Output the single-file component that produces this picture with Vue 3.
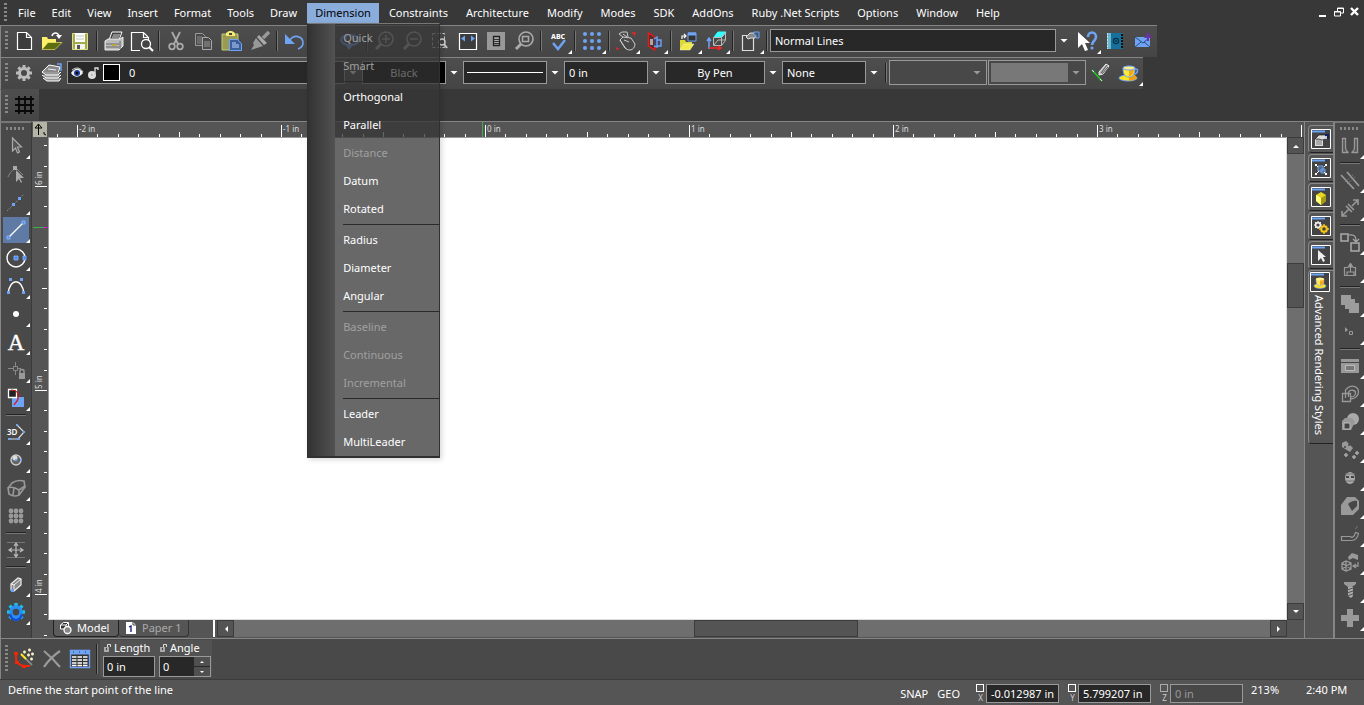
<template>
  <div class="app">
    <nav class="menubar">
      <span class="grip"></span>
      <div v-for="name in menus" :key="name" class="menu" :class="{ open: name === state.open }">
        <button class="menu-name" @click="toggle(name)">{{ name }}</button>
        <div v-if="name === 'Dimension' && name === state.open" class="dropdown">
          <div class="gutter"></div>
          <div class="entries">
            <template v-for="(item, i) in dimensionMenu" :key="i">
              <hr v-if="item === '|'" />
              <button v-else :disabled="disabledItems.includes(item)">{{ item }}</button>
            </template>
          </div>
        </div>
      </div>
      <div class="window-buttons">
        <button aria-label="Minimize"><svg viewBox="0 0 10 10"><path d="M1 9h7" stroke="#fff" stroke-width="2" /></svg></button>
        <button aria-label="Restore"><svg viewBox="0 0 10 10"><path d="M3.5 4V1h6v5H7M3 1.5h7" fill="none" stroke="#fff" /><path d="M.5 4.5h6V9h-6zM0 5h7" fill="none" stroke="#fff" /></svg></button>
        <button aria-label="Close"><svg viewBox="0 0 10 10"><path d="M1 1l7 7M8 1L1 8" stroke="#fff" stroke-width="2.4" /></svg></button>
      </div>
    </nav>

    <div class="toolbar">
      <span class="grip"></span>
      <template v-for="(name, i) in mainTools" :key="i">
        <span v-if="name === '|'" class="sep"></span>
        <button v-else class="tool" :class="{ more: withMore.includes(name) }" :aria-label="name">
          <svg viewBox="0 0 28 28" v-html="icons[name]"></svg>
        </button>
      </template>
      <div class="combo">
        <div class="box style-box">
          <select aria-label="Line style"><option>Normal Lines</option></select>
        </div>
        <span class="arrow"></span>
      </div>
      <button v-for="name in helpTools" :key="name" class="tool" :class="{ more: name === 'help' }" :aria-label="name">
        <svg viewBox="0 0 28 28" v-html="icons[name]"></svg>
      </button>
    </div>

    <div class="toolbar">
      <span class="grip"></span>
      <button class="tool" aria-label="Settings"><svg viewBox="0 0 28 28" v-html="icons.gear"></svg></button>
      <button class="tool" aria-label="Layers"><svg viewBox="0 0 28 28" v-html="icons.layers"></svg></button>
      <div class="combo">
        <div class="box layer-box">
          <svg viewBox="0 0 32 16" v-html="icons.eyeLock"></svg>
          <span class="swatch"></span>
          <select aria-label="Layer"><option>0</option></select>
        </div>
        <span class="arrow"></span>
      </div>
      <div class="combo">
        <div class="box color-box">
          <select aria-label="Pen color"><option>Black</option></select>
        </div>
        <span class="arrow"></span>
      </div>
      <div class="combo">
        <div class="box pattern-box">
          <select aria-label="Pen pattern"><option></option></select>
        </div>
        <span class="arrow"></span>
      </div>
      <div class="combo">
        <div class="box">
          <select aria-label="Pen width"><option>0 in</option></select>
        </div>
        <span class="arrow"></span>
      </div>
      <div class="combo">
        <div class="box brush-box">
          <select aria-label="Brush color"><option>By Pen</option></select>
        </div>
        <span class="arrow"></span>
      </div>
      <div class="combo">
        <div class="box">
          <select aria-label="Brush pattern"><option>None</option></select>
        </div>
        <span class="arrow"></span>
      </div>
      <span class="sep"></span>
      <div class="box off-box">
        <select aria-label="Material" disabled><option></option></select>
        <span class="arrow"></span>
      </div>
      <div class="box off-box filled">
        <select aria-label="Render style" disabled><option></option></select>
        <span class="arrow"></span>
      </div>
      <button class="tool" aria-label="Pick"><svg viewBox="0 0 28 28" v-html="icons.pick"></svg></button>
      <button class="tool more" aria-label="Render"><svg viewBox="0 0 28 28" v-html="icons.cup"></svg></button>
    </div>

    <div class="toolbar last">
      <span class="grip"></span>
      <button class="tool" aria-label="Grid"><svg viewBox="0 0 28 28" v-html="icons.hash"></svg></button>
    </div>

    <main class="work">
      <aside class="side left">
        <span class="grip flat"></span>
        <template v-for="(name, i) in drawTools" :key="i">
          <span v-if="name === '|'" class="sep flat"></span>
          <button
            v-else
            class="tool"
            :class="{ more: name !== 'node', active: name === state.tool }"
            :aria-label="name"
            @click="state.tool = name"
          >
            <svg viewBox="0 0 28 28" v-html="icons[name]"></svg>
          </button>
        </template>
      </aside>

      <section class="sheet">
        <div class="corner">
          <svg viewBox="0 0 14 14"><path d="M5.5 13V3M2 6l3.5-4L9 6M2 6h7M11 10v2l2 1" fill="none" stroke="#000" /></svg>
        </div>
        <svg class="ruler-x">
          <rect v-for="t in ticksX" :key="t.at" :x="t.at" :y="15 - t.size" width="1" :height="t.size" fill="#fff" />
          <text v-for="(x, i) in inchesX" :key="x" :x="x + 2" y="10">{{ i - 2 }} in</text>
          <rect x="434" y="0" width="1" height="15" fill="#3fae4a" />
        </svg>
        <svg class="ruler-y">
          <rect v-for="t in ticksY" :key="t.at" :x="14 - t.size" :y="t.at" :width="t.size" height="1" fill="#fff" />
          <text v-for="(y, i) in inchesY" :key="y" :transform="`translate(9 ${y - 1}) rotate(-90)`">{{ 6 - i }} in</text>
          <rect x="0" y="90" width="11" height="1" fill="#3fae4a" />
          <rect x="11" y="90" width="3" height="1" fill="#f0f" />
        </svg>
        <div class="canvas"></div>
        <div class="scroll-y">
          <button aria-label="Scroll up"><svg viewBox="0 0 8 8"><path d="M1 6l3-3 3 3z" fill="#fff" /></svg></button>
          <span class="before"></span><span class="thumb"></span><span class="after"></span>
          <button aria-label="Scroll down"><svg viewBox="0 0 8 8"><path d="M1 2l3 3 3-3z" fill="#fff" /></svg></button>
        </div>
        <div class="sheet-tabs">
          <div class="tabs">
            <button class="tab current"><svg viewBox="0 0 14 14" v-html="icons.model"></svg>Model</button>
            <button class="tab"><svg viewBox="0 0 14 14" v-html="icons.paper"></svg>Paper 1</button>
          </div>
          <div class="scroll-x">
            <button aria-label="Scroll left"><svg viewBox="0 0 8 8"><path d="M6 1L3 4l3 3z" fill="#fff" /></svg></button>
            <span class="before"></span><span class="thumb"></span><span class="after"></span>
            <button aria-label="Scroll right"><svg viewBox="0 0 8 8"><path d="M2 1l3 3-3 3z" fill="#fff" /></svg></button>
          </div>
          <div class="size-box"></div>
        </div>
      </section>

      <aside class="palettes">
        <button v-for="name in palettes" :key="name" class="palette" :aria-label="name">
          <svg viewBox="0 0 22 22"><g v-html="icons.frame"></g><g v-html="icons[name]"></g></svg>
        </button>
        <button class="palette current">
          <svg viewBox="0 0 22 22"><g v-html="icons.frame"></g><g v-html="icons.palCup"></g></svg>
          <span>Advanced Rendering Styles</span>
        </button>
      </aside>

      <aside class="side right">
        <span class="grip flat"></span>
        <template v-for="(name, i) in modifyTools" :key="i">
          <span v-if="name === '|'" class="sep flat"></span>
          <button v-else class="tool more" :aria-label="name">
            <svg viewBox="0 0 28 28" v-html="icons[name]"></svg>
          </button>
        </template>
      </aside>
    </main>

    <div class="inspector">
      <span class="grip"></span>
      <button v-for="name in editTools" :key="name" class="tool" :aria-label="name">
        <svg viewBox="0 0 28 28" v-html="icons[name]"></svg>
      </button>
      <span class="sep"></span>
      <div class="field">
        <label for="length"><svg viewBox="0 0 9 10" v-html="icons.lock"></svg>Length</label>
        <input id="length" v-model="state.length" />
      </div>
      <div class="field">
        <label for="angle"><svg viewBox="0 0 9 10" v-html="icons.lock"></svg>Angle</label>
        <div class="spin">
          <input id="angle" v-model="state.angle" />
          <div class="steps">
            <button aria-label="Increase" @click="state.angle++"><svg viewBox="0 0 8 8"><path d="M2 5l2-2 2 2z" fill="#fff" /></svg></button>
            <button aria-label="Decrease" @click="state.angle--"><svg viewBox="0 0 8 8"><path d="M2 3l2 2 2-2z" fill="#fff" /></svg></button>
          </div>
        </div>
      </div>
    </div>

    <footer class="status">
      <span class="hint">Define the start point of the line</span>
      <button class="snap">SNAP</button>
      <button class="geo">GEO</button>
      <div v-for="c in coords" :key="c.axis" class="coord" :class="{ off: c.off }">
        <label :for="c.axis"><i></i>{{ c.axis }}</label>
        <input :id="c.axis" v-model="c.value" :disabled="c.off" />
      </div>
      <span class="zoom">213%</span>
      <span class="clock">2:40 PM</span>
    </footer>
  </div>
</template>

<script setup>
import { reactive } from 'vue'

const state = reactive({
  open: 'Dimension',
  tool: 'line',
  length: '0 in',
  angle: 0,
})

const toggle = (name) => {
  state.open = state.open === name ? '' : name
}

const coords = reactive([
  { axis: 'X', value: '-0.012987 in' },
  { axis: 'Y', value: '5.799207 in' },
  { axis: 'Z', value: '0 in', off: true },
])

const menus = [
  'File', 'Edit', 'View', 'Insert', 'Format', 'Tools', 'Draw', 'Dimension', 'Constraints',
  'Architecture', 'Modify', 'Modes', 'SDK', 'AddOns', 'Ruby .Net Scripts', 'Options', 'Window', 'Help',
]

const dimensionMenu = [
  'Quick', 'Smart', '|',
  'Orthogonal', 'Parallel', 'Distance', 'Datum', 'Rotated', '|',
  'Radius', 'Diameter', 'Angular', '|',
  'Baseline', 'Continuous', 'Incremental', '|',
  'Leader', 'MultiLeader',
]
const disabledItems = ['Quick', 'Smart', 'Distance', 'Baseline', 'Continuous', 'Incremental']

const mainTools = [
  'file', 'open', 'save', '|', 'print', 'preview', '|', 'cut', 'copy', 'paste', 'brush', '|',
  'undo', 'redo', 'orbit', '|', 'zoomIn', 'zoomOut', 'zoomWindow', 'fit', 'page', 'zoomPage', '|',
  'spell', '|', 'dots', '|', 'hand', 'plane', '|', 'folder', 'cube', '|', 'props', '|',
]
const withMore = ['spell', 'dots', 'hand', 'plane', 'folder', 'cube', 'props']
const helpTools = ['help', 'book', 'mail']
const drawTools = [
  'select', 'node', 'construct', 'line', 'circle', 'curve', 'point', 'text', 'snapLock', 'shapes', '|',
  'poly3d', 'sphere', 'mesh', 'array', '|', 'move', '|', 'solid', 'options',
]
const modifyTools = [
  'magnet', '|', 'split', 'stretch', '|', 'copyTo', 'exportBox', '|', 'union', 'vertex', '|',
  'window', 'offset', 'shell', 'spray', 'face', 'bevel', 'bend', 'explode', 'screw', 'plus',
]
const palettes = ['palProps', 'palSelect', 'palCube', 'palGears', 'palCursor']
const editTools = ['wand', 'cancel', 'table']

// 204px per inch, ten divisions each
const makeTicks = (first, from, to) => {
  const list = []
  for (let n = -10; n < 80; n++) {
    const at = Math.round(first + n * 20.4)
    if (at < from || at > to) continue
    const mod = ((n % 10) + 10) % 10
    list.push({ at, size: mod === 0 ? 12 : mod === 5 ? 5 : 3 })
  }
  return list
}
const ticksX = makeTicks(29, 0, 1600)
const ticksY = makeTicks(49, 0, 1200)
const inchesX = [29, 233, 437, 641, 845, 1049]
const inchesY = [49, 253, 457]

const magnifier = '<circle cx="16" cy="12" r="7" fill="none" stroke="#aaa" stroke-width="1.6"/><path d="M11 17l-5 5" stroke="#aaa" stroke-width="3"/>'

const dotGrid = (steps, r, color) =>
  steps.map((y) => steps.map((x) => `<circle cx="${x}" cy="${y}" r="${r}" fill="${color}"/>`).join('')).join('')

// eight teeth round a ring
const cog = (teeth, ring) =>
  [0, 45, 90, 135].map((a) => `<path d="M14 6v16" stroke="${teeth}" stroke-width="3" transform="rotate(${a} 14 14)"/>`).join('') +
  `<circle cx="14" cy="14" r="4.5" fill="#484848" stroke="${ring}" stroke-width="3"/>`

const icons = {
  file: '<path d="M7.5 5.5h9l5 5v12h-14zM16.5 5.5v5h5" fill="#3c3c3c" stroke="#fff" stroke-width="1.2"/>',
  open: '<path d="M4 22V10h5l1 2h8v4" fill="#ffef6b"/><path d="M4 22.5l6-7h14l-7 7z" fill="#5c6e10" stroke="#ffef6b" stroke-width=".6"/><path d="M14 9c1-4 6-4 7 0" fill="none" stroke="#fff" stroke-width="1.5"/><path d="M18 8h6l-3 4z" fill="#fff"/>',
  save: '<path d="M6.5 6.5h15v16h-15z" fill="#a6a84e" stroke="#e0e28a"/><path d="M9 6h10v9H9z" fill="#fff"/><path d="M10 9h8M10 12h8" stroke="#b8c8c0"/><path d="M9 17h10v5H9z" fill="#f4f4f4"/><path d="M11 18h3v4h-3z" fill="#555"/>',
  print: '<path d="M9 13l3-8h10l-3 8z" fill="#444" stroke="#fff"/><path d="M13 8h7M12 10h7" stroke="#ccc"/><path d="M5 14l3-2h12l3-2v9l-4 4H5z" fill="#bbb" stroke="#eee"/><path d="M6 17h13M6 20h13M20 14v8" stroke="#666"/><path d="M12 17h4v2h-4z" fill="#b8a838"/>',
  preview: '<path d="M12 23.5H3.5v-18h12l5 5V14M15.5 5.5v5h5" fill="none" stroke="#fff" stroke-width="1.2"/><circle cx="18" cy="17" r="4.5" fill="#444" stroke="#fff" stroke-width="1.3"/><path d="M21 20l4 4" stroke="#fff" stroke-width="2.2"/>',
  cut: '<path d="M10 5l6 12M18 5l-6 12" stroke="#aaa" stroke-width="1.8"/><circle cx="10" cy="19.5" r="2.8" fill="none" stroke="#aaa" stroke-width="1.8"/><circle cx="18" cy="19.5" r="2.8" fill="none" stroke="#aaa" stroke-width="1.8"/>',
  copy: '<path d="M5.5 6.5h7l3 3v9h-10z" fill="#4a4a4a" stroke="#999"/><path d="M7 10h5M7 12h5M7 14h5M7 16h5" stroke="#888"/><path d="M12.5 10.5h6l3 3v9h-9z" fill="#4a4a4a" stroke="#aaa"/><path d="M14 15h6M14 17h6M14 19h6" stroke="#999"/>',
  paste: '<path d="M4 7h16v16H4z" fill="#9a9a52" stroke="#c8c878"/><path d="M8 9V6l3-2h3l3 2v3z" fill="#f4eb72"/><path d="M11 6h3v2h-3z" fill="#444"/><path d="M11.5 12.5h8l4 4v7h-12z" fill="#3c5f9c" stroke="#6fa4f5"/><path d="M14 16h4M14 18h7M14 20h7" stroke="#bcd4ff"/>',
  brush: '<path d="M23 5l-6 6" stroke="#999" stroke-width="3.5"/><path d="M13 8l8 8-3 2-7-8z" fill="#aaa"/><path d="M10 11l7 8-6 2-6 2 3-5-1-2z" fill="#999"/>',
  undo: '<path d="M10 13c4-6 13-4 13 3 0 4-3 5-5 6" fill="none" stroke="#6fa4f5" stroke-width="1.6"/><path d="M5 7v10h10z" fill="#6fa4f5"/>',
  redo: '<path d="M18 13C14 7 5 9 5 16c0 4 3 5 5 6" fill="none" stroke="#888" stroke-width="1.6"/><path d="M23 7v10H13z" fill="#888"/>',
  orbit: '<ellipse cx="14" cy="13" rx="9" ry="5" fill="none" stroke="#6fa4f5" stroke-width="2"/><path d="M10 15c-1-10 8-10 8 0" fill="none" stroke="#6fa4f5" stroke-width="1.6"/><path d="M9 17h9l-5 6z" fill="#6fa4f5"/>',
  zoomIn: magnifier + '<path d="M12 12h8M16 8v8" stroke="#aaa" stroke-width="1.5"/>',
  zoomOut: magnifier + '<path d="M12 12h8" stroke="#aaa" stroke-width="1.5"/>',
  zoomWindow: '<path d="M6.5 6.5h12v14h-12z" fill="none" stroke="#ccc" stroke-dasharray="3 2"/><circle cx="16" cy="15" r="3" fill="#444" stroke="#ccc" stroke-width="1.5"/><path d="M18 17l3 4" stroke="#ccc" stroke-width="2"/>',
  fit: '<path d="M5.5 6.5h17v16h-17z" fill="#3c3c3c" stroke="#fff" stroke-width="1.2"/><path d="M7 11.5l4-3v6zM21 11.5l-4-3v6z" fill="#6fa4f5"/>',
  page: '<path d="M5 5h18v18H5z" fill="#999"/><path d="M11.5 9.5h6v9h-6z" fill="#aaa" stroke="#222" stroke-width="1.3"/><path d="M12 12.5h5M12 14.5h5M12 16.5h5" stroke="#333"/>',
  zoomPage: magnifier + '<path d="M12.5 9.5h6v5h-6z" fill="none" stroke="#aaa" stroke-width="1.5"/>',
  spell: '<text x="14" y="12" text-anchor="middle" font-family="Noto Sans, sans-serif" font-weight="800" font-size="7" fill="#fff">ABC</text><path d="M9 16l5 6 7-9" fill="none" stroke="#6fa4f5" stroke-width="2.4"/>',
  dots: dotGrid([7, 14, 21], 2, '#6fa4f5'),
  hand: '<path d="M8 13l3-3 8 1 4 6c0 3-2 6-5 6-2 0-4-1-5-2zM8 13l6 9M11 10l-4-3 3-2h5l1 5M11 7l4 3M12 13l5 2" fill="none" stroke="#ccc"/><path d="M20 6h3l-1 3M5 23v-2l2 1" stroke="#e22" stroke-width="1.3" fill="none"/>',
  plane: '<path d="M8.5 6v13l6 4V10z" fill="#433" stroke="#f11" stroke-width="1.4"/><path d="M14 12l3-2v10l-3-1M17 13h4v6h-4" fill="#446" stroke="#6fa4f5" stroke-width="1.4"/><path d="M10 12h3v6h-3z" fill="#aaa"/>',
  folder: '<path d="M6 23V13h5l1 2h6v3" fill="#ddd83a"/><path d="M6 23l4-6h10l-4 6z" fill="#f3ec48" stroke="#fff" stroke-width=".4"/><path d="M14 6h8v8h-8z" fill="#333" stroke="#6fa4f5"/><path d="M14 7h8" stroke="#6fa4f5" stroke-width="3"/><path d="M8 12V9h4M10 7l2 2-2 2" fill="none" stroke="#fff" stroke-width="1.2"/>',
  cube: '<path d="M12 10l4-5h8l-4 5z" fill="#3ff" stroke="#3ff"/><path d="M11.5 10.5h8v8h-8zM19.5 10.5l4-5v8l-4 5M12 18l4-5h7" fill="none" stroke="#bbb"/><path d="M7 22V12M5 14l2-3 2 3" fill="none" stroke="#6fa4f5" stroke-width="1.5"/><path d="M7 21h11M16 19l3 2-3 2" fill="none" stroke="#f22" stroke-width="1.5"/>',
  props: '<path d="M6.5 8.500h11v15h-11z" fill="#444" stroke="#ddd" stroke-width="1.2"/><path d="M10 10l4-4h5l2 2-2 3h-4l-3 1z" fill="#888" stroke="#ddd"/><path d="M18 5h5v6h-3V8h-2z" fill="#456" stroke="#6fa4f5"/>',
  help: '<path d="M5 5v16l4-4 3 7 3-1-3-7h5z" fill="#fff"/><path d="M15 10c0-6 8-6 8 0 0 4-4 4-4 8" fill="none" stroke="#6fa4f5" stroke-width="2.6"/><circle cx="19" cy="21" r="1.6" fill="#6fa4f5"/>',
  book: '<path d="M6 6h16v16H6z" fill="#186f9c"/><path d="M6 6h4v16H6z" fill="#68b8d0"/><path d="M6.5 6v16" stroke="#cde" stroke-dasharray="2 1"/><path d="M21 7v15" stroke="#111" stroke-width="2" stroke-dasharray="2 1"/><circle cx="15" cy="14" r="2.6" fill="none" stroke="#034" stroke-width="1.2"/><circle cx="15" cy="14" r="1" fill="#034"/>',
  mail: '<path d="M6 10h15v10H6z" fill="#6fa4f5"/><path d="M6 10l8 6 7-6M6 20l6-5M21 20l-6-5" fill="none" stroke="#294a80"/><path d="M19 14V8M17 10l2-3 2 3z" stroke="#6a34a8" stroke-width="2" fill="#6a34a8"/>',
  gear: cog('#bbb', '#bbb'),
  layers: '<path d="M4 13l7-7 6 1 5 1-2 6H7z" fill="#888" stroke="#fff"/><path d="M4 13l4 3h12l3-3M4 16l4 3h12l3-3M5 19l4 3h12l2-3" fill="#999" stroke="#fff"/><path d="M10 10l8 1" stroke="#eee"/><path d="M19 5h4v7" stroke="#6fa4f5" stroke-width="1.5" fill="none"/>',
  eyeLock: '<path d="M1 8c4-6 9-6 12 0-4 5-9 5-12 0z" fill="#eee"/><path d="M2 5c4-3 8-3 11 2" fill="none" stroke="#ccc"/><circle cx="7" cy="8" r="3" fill="#1f3d96"/><circle cx="7" cy="8" r="1.2" fill="#000"/><circle cx="22" cy="10" r="4" fill="#ddd"/><path d="M25 8V3h3v2" fill="none" stroke="#ddd" stroke-width="1.3"/><path d="M22 9v2" stroke="#999"/>',
  pick: '<path d="M5 11l10 11" stroke="#2c2" stroke-width="1.5"/><path d="M5 11l2 2M13 20l2 2" stroke="#ddd"/><path d="M12 13l7-8 3 2-6 8-4 1z" fill="#bbb" stroke="#eee"/><path d="M14 14l6-8M15 15l6-7" stroke="#555"/>',
  cup: '<ellipse cx="13" cy="19" rx="9" ry="3" fill="#ffe61c" stroke="#6fa4f5"/><path d="M14 16h6l2 3-4 2.5h-4z" fill="#f0a010"/><path d="M8 9c0 8 3 9 6 9s6-1 6-9z" fill="#ffe93a" stroke="#6fa4f5"/><path d="M14 9h5c0 6-2 8-5 8z" fill="#f4a81c"/><ellipse cx="14" cy="9" rx="6" ry="2" fill="#fff08a" stroke="#6fa4f5"/><path d="M20 10c4-1 3 5-1 5" fill="none" stroke="#6fa4f5" stroke-width="1.5"/>',
  hash: '<path d="M9 5v18M15 5v18M21 5v18M5 8h19M5 14h19M5 20h19" stroke="#080808" stroke-width="1.8"/>',

  select: '<path d="M10.5 6v13l3-3 2 5 2-1-2-5h4z" fill="#555" stroke="#aaa" stroke-width="1.2"/>',
  node: '<path d="M6 17c2-5 5-7 8-9l7 7" fill="none" stroke="#888"/><path d="M11 6h4v4h-4z" fill="#aaa"/><path d="M14 10v12l3-3 2 4 1-1-2-4h4z" fill="#aaa"/>',
  construct: '<path d="M5 23L22 6" stroke="#888" stroke-dasharray="2 1"/><path d="M10 15h3v3h-3zM16 9h3v3h-3z" fill="#6fa4f5"/>',
  line: '<path d="M6 22L22 6" stroke="#fff" stroke-width="1.3"/><path d="M5 20h3v3H5zM20 5h3v3h-3z" fill="#4d8ef0" stroke="#a5c6ff" stroke-width=".7"/>',
  circle: '<circle cx="14" cy="14" r="9" fill="none" stroke="#fff" stroke-width="1.4"/><path d="M12 12h4v4h-4zM21 12h3v4h-3z" fill="#4d8ef0" stroke="#8ab4ff" stroke-width=".8"/>',
  curve: '<path d="M6 21C9 6 19 6 22 21" fill="none" stroke="#fff" stroke-width="1.3"/><path d="M5 19h3v3H5zM20 19h3v3h-3zM7 6h3v3H7zM18 6h3v3h-3z" fill="#6fa4f5"/>',
  point: '<circle cx="14" cy="14" r="3" fill="#fff"/>',
  text: '<text x="14" y="22" text-anchor="middle" font-family="Liberation Serif, serif" font-size="23" fill="#fff" stroke="#fff" stroke-width=".4">A</text>',
  snapLock: '<path d="M6 12.5h5M15 12.5h4M13.5 6v4M13.5 15v4M11.5 10.5h4v4h-4z" fill="none" stroke="#888"/><path d="M17 17h6v6h-6z" fill="#999"/><path d="M18 17v-2c0-2 4-2 4 0v2" fill="none" stroke="#999" stroke-width="1.4"/>',
  shapes: '<path d="M10 13h12v10H10z" fill="#6fa4f5"/><path d="M6.5 5.5h8v8h-8z" fill="#222" stroke="#fff" stroke-width="1.3"/><path d="M9 6c7 0 8 4 7 9-1 3-3 4-4 6" fill="none" stroke="#d11" stroke-width="1.2"/>',
  poly3d: '<text x="5" y="17" font-family="Noto Sans, sans-serif" font-size="8" font-weight="600" fill="#fff">3D</text><path d="M15 7l7 7-6 7H8" fill="none" stroke="#ddd" stroke-width="1.2"/><path d="M14 6h2v2h-2zM21 13h2v2h-2zM15 20h3v2h-3zM6 20h3v2H6z" fill="#6fa4f5"/>',
  sphere: '<circle cx="14" cy="14" r="5" fill="#666" stroke="#ccc" stroke-width="1.4"/><circle cx="13" cy="12" r="2.5" fill="#ddd"/><path d="M13 13h2v2h-2zM18 13h2v2h-2z" fill="#6fa4f5"/>',
  mesh: '<path d="M6 14l4-5c4-3 8-3 12-2l1 6-6 8c-4 2-7 1-10-1z" fill="#4a4a4a" stroke="#999" stroke-width="1.6"/><path d="M6 14c4-2 8 0 11 2v5M17 16l6-4M12 14l-1 7" stroke="#999" stroke-width="1.6" fill="none"/>',
  array: dotGrid([9, 14, 19], 2.4, '#999'),
  move: '<path d="M5 6.5h18M5 21.5h18" stroke="#777"/><path d="M14 8v12M8 14h12M12 10l2-3 2 3M12 18l2 3 2-3M10 12l-3 2 3 2M18 12l3 2-3 2" fill="none" stroke="#bbb" stroke-width="1.2"/>',
  solid: '<path d="M9 14l7-6 3 1v6l-7 6-3-1z" fill="#888" stroke="#eee" stroke-width="1.2"/><path d="M12 15l7-6M12 15v6M9 14l3 1" stroke="#eee" fill="none"/><path d="M9 19h3v3H9z" fill="#6fa4f5"/>',
  options: '<g transform="translate(-1.75 -1.75) scale(1.125)">' + cog('#19c3f0', '#2a8df4') + '<path d="M9 16a5 5 0 0 0 10 0" fill="none" stroke="#1648d8" stroke-width="2"/></g>',

  magnet: '<path d="M6.5 6.5h3v8c0 3 1 5 3 6h-6zM21.5 6.5h-3v8c0 3-1 5-3 6h6z" fill="#555" stroke="#999" stroke-width="1.3"/>',
  split: '<path d="M5 9l13 14M11 6l12 14" stroke="#999" stroke-width="1.8"/><path d="M9 16l9-8M11 18l9-8" stroke="#777" stroke-dasharray="2 1"/>',
  stretch: '<path d="M7 21l6-6M16 12l5-5M17 6h5v5M6 17v5h5M10 12l6 6M12 10l6 6" fill="none" stroke="#999" stroke-width="1.6"/>',
  copyTo: '<path d="M5 6h7v7H5zM15 15h8v8h-8z" fill="none" stroke="#aaa" stroke-width="1.5"/><path d="M13 7c6-1 7 2 7 6M17 11l3 3 3-3" fill="none" stroke="#aaa" stroke-width="1.2"/>',
  exportBox: '<path d="M12 11.5H8.5v8h11v-8H17M11 19v-3h7v3" fill="none" stroke="#999" stroke-width="1.2"/><path d="M14.5 16V9M12 11l2.5-4 2.5 4z" stroke="#999" fill="#999"/>',
  union: '<path d="M5 5h10v4h4v4h4v10H13v-4H9v-4H5z" fill="#9c9c9c"/>',
  vertex: '<path d="M9 9l3 3-3 2z" fill="#999"/><path d="M13.5 13.5h3v3h-3z" fill="none" stroke="#999"/>',
  window: '<path d="M5 7h18v14H5z" fill="#999"/><path d="M5 10.5h18" stroke="#444"/><path d="M9.5 13.5h9v5h-9z" fill="#777" stroke="#bbb"/>',
  offset: '<path d="M6.5 21.5v-8h8v8z" fill="none" stroke="#999" stroke-width="1.3"/><path d="M9.5 18v-8l2-2c5-4 11-1 11 4 0 4-4 7-8 7M12.5 17v-5c2-3 7-2 7 1 0 2-2 4-5 4" fill="none" stroke="#999" stroke-width="1.3"/>',
  shell: '<circle cx="17" cy="11" r="6" fill="#aaa"/><path d="M6 13l3-3h7l3 4-4 8H6z" fill="#999"/><path d="M8 15h6v6H8z" fill="#444" stroke="#bbb"/>',
  spray: '<path d="M6 7l4-2 7 7-3 4-8-5z" fill="#999"/><path d="M8 11h2M12 9h2" stroke="#444" stroke-width="1.5"/><path d="M8 19h4M10 17v4M16 21h4M18 19v4M19 17h4M21 15v4" stroke="#aaa" stroke-width="1.5"/>',
  face: '<ellipse cx="14" cy="14" rx="5" ry="6" fill="#aaa"/><path d="M10 13h3M15 13h3" stroke="#444" stroke-width="2"/><path d="M9 10h10M10 17h8" stroke="#777"/>',
  bevel: '<path d="M5 13l6-8h8l4 4v8l-6 6H5z" fill="#999"/><path d="M12 12c2-2 6-4 9-3v5l-5 5z" fill="#484848"/>',
  bend: '<path d="M5.5 16.5h9l1 1c3 0 3-3 4-5l3 1c-1 5-3 7-7 7h-10z" fill="none" stroke="#999" stroke-width="1.2"/><path d="M19 9c1 0 2-1 2-3" stroke="#777" fill="none"/>',
  explode: '<path d="M6 15l4-2 5 2v6l-5 2-4-2zM6 15l9 6M15 15l-9 6M10 13v10" fill="none" stroke="#999" stroke-width="1.3"/><path d="M12 9l4-4 6 2v5l-5-2-4 2z" fill="#999"/><path d="M22 14v4h-4M20 16l-3 2 3 2" fill="none" stroke="#999" stroke-width="1.3"/>',
  screw: '<path d="M8 6h12v2l-4 3h-4L8 8z" fill="#999"/><path d="M12 11h5v9l-2 2-3-2z" fill="#aaa"/><path d="M11 14l6-2M11 17l6-2M11 20l6-2" stroke="#555"/>',
  plus: '<path d="M11 5h6v6h6v6h-6v6h-6v-6H5v-6h6z" fill="#999"/>',

  frame: '<path d="M1.5 1.5h19v19h-19z" fill="#444" stroke="#fff"/><path d="M2 3.5h13" stroke="#6fa4f5" stroke-width="2"/><path d="M15 3.5h5" stroke="#345" stroke-width="2" stroke-dasharray="2 1"/>',
  palProps: '<path d="M5 11h8v7H5z" fill="#ddd"/><path d="M7 11v6M9 11v6M11 11v6" stroke="#777"/><path d="M5 11l4-4h7v4l-4 1-3-1z" fill="#ddd" stroke="#111" stroke-width=".6"/><path d="M15 6h4v5h-4z" fill="#126"/><path d="M15 8h2v3h-2z" fill="#ccc"/>',
  palSelect: '<path d="M5 7h2v2H5zM15 7h2v2h-2zM5 16h2v2H5zM15 16h2v2h-2z" fill="#fff"/><path d="M8 9h5v5H8zM11 12h4v4h-4z" fill="#567" stroke="#6fa4f5"/><path d="M7 9l1 1M15 9l-1 1M7 16l2-2M15 16l-1-1" stroke="#fff"/>',
  palCube: '<path d="M6 9l5-3 5 3v6l-5 4-5-4z" fill="#e8d820"/><path d="M6 9l5 3v7l-5-4z" fill="#ffff80"/><path d="M11 12l5-3v6l-5 4z" fill="#a89a10"/>',
  palGears: '<circle cx="8" cy="10" r="2.4" fill="none" stroke="#eee" stroke-width="1.6"/><path d="M8 6v2M8 12v2M4 10h2M10 10h2M5 7l1 1M11 7l-1 1M5 13l1-1" stroke="#eee"/><circle cx="14" cy="14" r="2.8" fill="none" stroke="#f5c518" stroke-width="2"/><path d="M14 9v2M14 17v2M9 14h2M17 14h2M11 11l1 1M17 11l-1 1M11 17l1-1M17 17l-1-1" stroke="#f5c518" stroke-width="1.4"/>',
  palCursor: '<path d="M8 6v11l3-3 2 4 2-1-2-4h3z" fill="#eee"/>',
  palCup: '<ellipse cx="11" cy="15" rx="6" ry="2.5" fill="#ffe61c" stroke="#6fa4f5" stroke-width=".6"/><path d="M7 8c0 5 1 7 4 7s4-2 4-7z" fill="#ffe45a" stroke="#6fa4f5" stroke-width=".6"/><path d="M11 8h4c0 5-1 6-4 6z" fill="#f4a81c"/><ellipse cx="11" cy="8" rx="4" ry="1.5" fill="#fff08a"/>',
  model: '<path d="M1.5 4l3-2.5h5v4L7 8H1.5z" fill="#333" stroke="#fff"/><path d="M1.5 4H7v4M7 4l2.5-2.5" fill="none" stroke="#fff"/><circle cx="8.5" cy="9" r="3.5" fill="#888" stroke="#fff" stroke-width="1.3"/>',
  paper: '<path d="M2 1h7l3 3v9H2z" fill="#fff"/><path d="M9 1v3h3" stroke="#444" fill="none"/><path d="M5 6l2-1v6" stroke="#13136e" stroke-width="1.3" fill="none"/>',
  wand: '<path d="M6 8v5c0 5 4 8 10 8h4" fill="none" stroke="#f0280a" stroke-width="2"/><path d="M4 7h4v3H4zM5 16h4v3H5zM12 20h4v3h-4z" fill="#f0280a"/><path d="M11 9l11 11" stroke="#888" stroke-width="1.8"/><path d="M11 9l5 5" stroke="#ffe81e" stroke-width="1.8"/><path d="M13 7h3M14.5 5.5v3M18 5h3M19.5 3.5v3M17 10h3M18.5 8.5v3M21 9h3M22.5 7.5v3M20 14h3M21.5 12.5v3" stroke="#f5f1c4" stroke-width="1.6"/>',
  cancel: '<path d="M6 6c6 5 11 10 16 16M22 6C16 10 10 16 6 22" fill="none" stroke="#999" stroke-width="2.2"/>',
  table: '<path d="M4.5 5.5h19v17h-19z" fill="#333" stroke="#6fa4f5" stroke-width="1.4"/><path d="M4 7.5h20" stroke="#6fa4f5" stroke-width="4"/><path d="M7 7h14" stroke="#335" stroke-dasharray="1 5"/><path d="M6 12h16M6 15h16M6 18h16M6 20.5h16" stroke="#fff" stroke-width="1.5" stroke-dasharray="4.5 1"/>',
  lock: '<path d="M1 4h5v5H1z" fill="#aaa"/><path d="M4.5 4V1.5h3V4" fill="none" stroke="#ddd"/><path d="M3 5h1v2H3z" fill="#444"/>',
}
</script>

<style>
body {
  margin: 0;
  background: #383838;
}
</style>

<style scoped>
.app {
  display: flex;
  flex-direction: column;
  min-height: 100vh;
  background: #383838;
  color: #fff;
  font: 11px/16px 'Noto Sans', 'Open Sans', sans-serif;
}
button,
input,
select {
  box-sizing: border-box;
  margin: 0;
  padding: 0;
  border: 0;
  border-radius: 0;
  background: none;
  color: inherit;
  font: inherit;
}
select {
  appearance: none;
  flex: 1;
  min-width: 0;
  opacity: 1;
}
svg {
  display: block;
}
.grip {
  flex: none;
  align-self: center;
  width: 3px;
  height: 20px;
  margin: 0 2px 0 4px;
  background: repeating-linear-gradient(#888 0 2px, transparent 2px 4px);
}
.grip.flat {
  width: 20px;
  height: 3px;
  margin: 4px 0 2px;
  background: repeating-linear-gradient(90deg, #888 0 2px, transparent 2px 4px);
}
.sep {
  flex: none;
  align-self: center;
  width: 2px;
  height: 20px;
  margin: 0 2px;
  background: linear-gradient(90deg, #222 50%, #777 50%);
}
.sep.flat {
  width: 20px;
  height: 2px;
  margin: 2px 0;
  background: linear-gradient(#222 50%, #777 50%);
}
.tool {
  position: relative;
  flex: none;
  width: 28px;
  height: 28px;
}
.tool svg {
  width: 28px;
  height: 28px;
}
.more::after {
  content: '';
  position: absolute;
  right: 0;
  bottom: 1px;
  border: 2px solid;
  border-color: transparent #fff #fff transparent;
}

.menubar {
  display: flex;
  height: 25px;
}
.menubar > .grip {
  margin-right: 3px;
}
.menu {
  position: relative;
  margin-top: 3px;
}
.menu:nth-child(n + 9) {
  margin-left: 2px;
}
.menu-name {
  height: 20px;
  padding: 0 8px;
  white-space: nowrap;
}
.open .menu-name {
  background: #8aaddb;
  color: #000;
}
.dropdown {
  position: absolute;
  z-index: 5;
  top: 20px;
  left: 0;
  display: flex;
  box-sizing: border-box;
  width: 133px;
  border: 1px solid #303030;
  border-top-color: #777;
  border-bottom-width: 2px;
  box-shadow: 2px 2px 5px rgba(0, 0, 0, 0.15);
}
.gutter {
  width: 27px;
  background: linear-gradient(90deg, #323232, #525252);
}
.entries {
  flex: 1;
  background: rgba(53, 53, 53, 0.75);
}
.entries button {
  display: block;
  width: 100%;
  height: 28px;
  padding-left: 8px;
  text-align: left;
}
.entries button:disabled {
  color: #a0a0a0;
}
.entries hr {
  height: 1px;
  margin: 1px 0 1px 8px;
  border: 0;
  background: #2a2a2a;
}
.window-buttons {
  display: flex;
  align-items: center;
  gap: 6px;
  margin: 0 4px 2px auto;
}
.window-buttons svg {
  width: 10px;
  height: 10px;
}

.toolbar {
  display: flex;
  align-items: center;
  align-self: flex-start;
  box-sizing: border-box;
  height: 32px;
  padding-bottom: 2px;
  border-top: 1px solid #858585;
  border-left: 1px solid #858585;
  background: linear-gradient(#4e4e4e, #454545);
}
.toolbar.last {
  padding-right: 1px;
  border-top-color: #4e4e4e;
}
.combo {
  display: flex;
  align-items: center;
}
.box {
  display: flex;
  align-items: center;
  box-sizing: border-box;
  width: 84px;
  height: 23px;
  border: 1px solid #999;
  background: #282828;
}
.box select {
  height: 21px;
  padding-left: 4px;
}
.style-box {
  width: 286px;
}
.layer-box {
  width: 278px;
  margin-left: 1px;
}
.layer-box svg {
  width: 32px;
  height: 16px;
  margin: 0 1px 0 2px;
}
.layer-box select {
  padding-left: 9px;
}
.swatch {
  width: 15px;
  height: 15px;
  border: 1px solid #fff;
  background: #000;
}
.color-box {
  background: #000;
}
.color-box select,
.brush-box select {
  padding: 0;
  text-align: center;
  text-align-last: center;
}
.pattern-box select {
  margin: 0 3px;
  background: linear-gradient(#fff, #fff) center / 100% 1px no-repeat;
}
.brush-box {
  width: 100px;
}
.off-box {
  width: 98px;
  height: 25px;
  margin-right: 1px;
  background: #484848;
}
.filled select {
  height: 19px;
  margin-left: 2px;
  background: #787878;
}
.arrow {
  width: 17px;
  height: 4px;
  background: #fff;
  clip-path: polygon(4px 0, 12px 0, 8px 4px);
}
.off-box .arrow {
  background: #999;
}

.work {
  display: flex;
  flex: 1;
}
.side {
  display: flex;
  flex-direction: column;
  align-items: center;
  box-sizing: border-box;
  border-top: 2px solid #777;
  border-left: 1px solid #858585;
  background: #494949;
}
.left {
  width: 32px;
  border-right: 1px solid #3a3a3a;
}
.right {
  width: 31px;
  border-left-width: 2px;
}
.active::before {
  content: '';
  position: absolute;
  inset: 1px;
  background: #5f7ba5;
}
.active svg {
  position: relative;
}
.sheet {
  flex: 1;
  display: grid;
  grid-template: 15px 1fr 18px / 15px 1fr 17px;
  min-width: 0;
  padding-left: 1px;
  border-top: 1px solid #858585;
  background: #555;
}
.corner {
  margin-right: 1px;
  background: #b5b5a5;
}
.corner svg {
  width: 14px;
  height: 14px;
}
.ruler-x {
  grid-column: 2 / 4;
  width: 100%;
  height: 15px;
}
.ruler-y {
  grid-row: 2 / 4;
  width: 14px;
  height: 100%;
}
.sheet text {
  fill: #ddd;
  font-size: 8px;
}
.canvas {
  border: 1px solid #999;
  border-right-color: #ddd;
  border-bottom-color: #ddd;
  background: #fff;
}
.scroll-y,
.scroll-x {
  display: flex;
  background: #6e6e6e;
}
.scroll-y {
  flex-direction: column;
}
.scroll-x {
  flex: 1;
}
.scroll-y button,
.scroll-x button {
  display: grid;
  place-items: center;
  width: 17px;
  height: 17px;
  border: 1px solid #3c3c3c;
  background: #545454;
}
.scroll-y svg,
.scroll-x svg {
  width: 8px;
  height: 8px;
}
.thumb {
  border: 1px solid #3c3c3c;
  background: #545454;
}
.scroll-y .before {
  flex: 110;
}
.scroll-y .thumb {
  flex: 43;
}
.scroll-y .after {
  flex: 297;
}
.scroll-x .before {
  flex: 460;
}
.scroll-x .thumb {
  flex: 163;
}
.scroll-x .after {
  flex: 412;
}
.sheet-tabs {
  grid-column: 2 / 4;
  display: flex;
  padding-bottom: 1px;
}
.tabs {
  display: flex;
  width: 160px;
  padding-left: 5px;
  margin-right: 2px;
  border-right: 2px solid #fff;
}
.tab {
  display: flex;
  align-items: center;
  gap: 4px;
  width: 70px;
  height: 17px;
  padding-left: 5px;
  border-right: 1px solid #333;
  border-bottom: 1px solid #333;
  border-radius: 0 0 4px 4px;
  color: #aaa;
}
.tab.current {
  width: 66px;
  border: 1px solid #222;
  border-top: 0;
  background: #5c5c5c;
  color: #fff;
}
.tab svg {
  width: 14px;
  height: 14px;
}
.size-box {
  width: 17px;
}
.palettes {
  width: 25px;
  padding: 3px 0 0 3px;
  border-top: 1px solid #858585;
  border-left: 1px solid #888;
  background: #555;
}
.palette {
  display: block;
  width: 25px;
  height: 28px;
  margin-bottom: 1px;
  padding-left: 1px;
  border-top: 1px solid #888;
  border-left: 1px solid #888;
  border-bottom: 1px solid #222;
  border-radius: 4px 0 0 4px;
}
.palette svg {
  width: 22px;
  height: 22px;
}
.palette.current {
  height: auto;
  padding: 0 0 8px;
}
.palette span {
  display: block;
  margin-left: 2px;
  padding-top: 2px;
  writing-mode: vertical-rl;
}

.inspector {
  display: flex;
  align-items: center;
  box-sizing: border-box;
  height: 41px;
  padding-bottom: 1px;
  border-top: 1px solid #858585;
  border-left: 1px solid #858585;
  background: #494949;
}
.inspector > .grip {
  height: 28px;
}
.inspector > .sep {
  height: 30px;
}
.field {
  box-sizing: border-box;
  height: 37px;
  width: 56px;
  padding-left: 3px;
  background: #525252;
}
.field label {
  display: flex;
  align-items: center;
  gap: 2px;
}
.field label svg {
  width: 9px;
  height: 10px;
}
.field > input,
.spin {
  width: 52px;
  height: 21px;
  border: 1px solid #999;
  background: #282828;
}
.field input {
  padding-left: 3px;
}
.spin {
  display: flex;
  box-sizing: border-box;
}
.spin input {
  flex: 1;
  min-width: 0;
}
.steps {
  display: flex;
  flex-direction: column;
  gap: 1px;
  width: 16px;
}
.steps button {
  display: grid;
  place-items: center;
  flex: 1;
  background: #505050;
}
.steps svg {
  width: 8px;
  height: 8px;
}

.status {
  display: flex;
  box-sizing: border-box;
  height: 26px;
  padding: 2px 14px 0 8px;
  border-top: 1px solid #3c3c3c;
  background: #555;
}
.status > button {
  height: 24px;
}
.hint {
  margin-right: auto;
}
.geo {
  margin: 0 15px 0 9px;
}
.coord {
  display: flex;
  width: 92px;
}
.coord label {
  width: 11px;
  padding-top: 1px;
  font-size: 8px;
  line-height: 8px;
  text-align: center;
  color: #ccc;
}
.coord i {
  display: block;
  width: 6px;
  height: 6px;
  margin: 1px 0 2px 1px;
  border: 1px solid #fff;
}
.coord input {
  width: 73px;
  height: 19px;
  margin-top: 2px;
  padding-left: 4px;
  border: 1px solid #999;
  background: #282828;
}
.coord.off input {
  background: #484848;
  color: #999;
}
.coord.off i {
  border-color: #aaa;
}
.zoom {
  width: 55px;
}
.clock {
  width: 44px;
  white-space: nowrap;
}
</style>
